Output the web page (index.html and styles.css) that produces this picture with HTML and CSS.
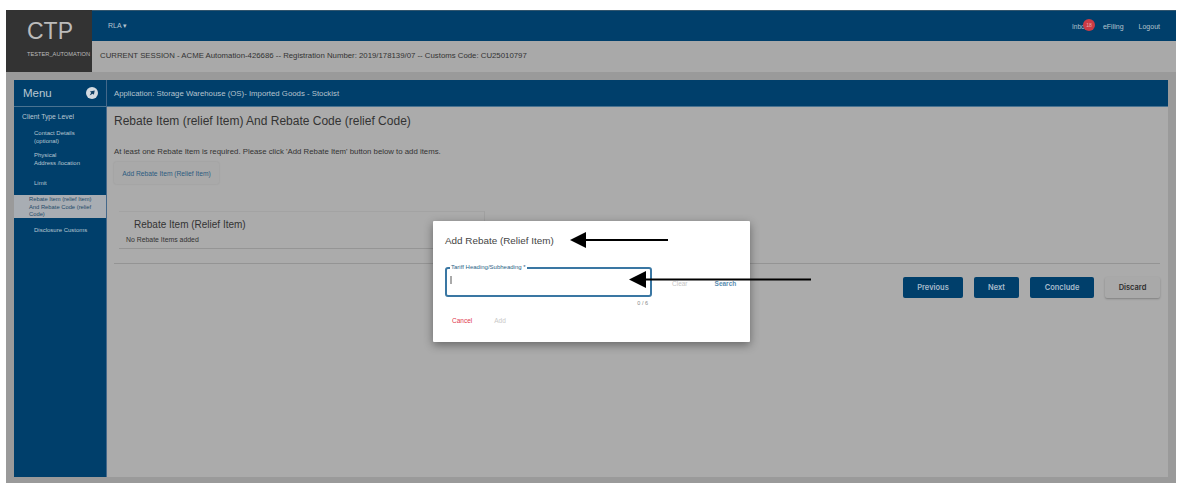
FILE: index.html
```html
<!DOCTYPE html>
<html lang="en">
<head>
    <meta charset="UTF-8">
    <title>CTP - Add Rebate</title>
    <link rel="stylesheet" href="styles.css">
</head>
<body>
    <div class="app">
        <header class="header">
            <div class="logo">
                <div class="logo-name">CTP</div>
                <div class="logo-user">TESTER_AUTOMATION</div>
            </div>
            <div class="header-main">
                <div class="topbar">
                    <span class="topbar-role">RLA &#9662;</span>
                    <nav class="topbar-links">
                        <span class="inbox">Inbox<span class="badge">18</span></span>
                        <span>eFiling</span>
                        <span>Logout</span>
                    </nav>
                </div>
                <div class="session">CURRENT SESSION - ACME Automation-426686 -- Registration Number: 2019/178139/07 -- Customs Code: CU25010797</div>
            </div>
        </header>

        <div class="workspace">
            <aside class="sidebar">
                <div class="menu-head">
                    <span>Menu</span>
                    <svg class="menu-icon" width="12" height="12" viewBox="0 0 11 11"><circle cx="5.5" cy="5.5" r="5.5" fill="#d4dbe1"/><path d="M8 3.2 3.6 4.2l1.2 1.1-1.6 2.4 3-1.6 1 1z" fill="#123f63"/></svg>
                </div>
                <ul class="menu">
                    <li class="menu-level">Client Type Level</li>
                    <li class="menu-item menu-contact">Contact Details<br>(optional)</li>
                    <li class="menu-item menu-physical">Physical<br>Address /location</li>
                    <li class="menu-item menu-one">Limit</li>
                    <li class="menu-active">Rebate Item (relief Item) And Rebate Code (relief Code)</li>
                    <li class="menu-item menu-one">Disclosure Customs</li>
                </ul>
            </aside>

            <main class="main">
                <div class="app-title">Application: Storage Warehouse (OS)- Imported Goods - Stockist</div>
                <div class="content">
                    <h1>Rebate Item (relief Item) And Rebate Code (relief Code)</h1>
                    <p class="hint">At least one Rebate Item is required. Please click 'Add Rebate Item' button below to add items.</p>
                    <button class="add-btn">Add Rebate Item (Relief Item)</button>
                    <section class="card">
                        <h2>Rebate Item (Relief Item)</h2>
                        <p>No Rebate Items added</p>
                    </section>
                    <hr class="rule">
                    <div class="actions">
                        <button class="btn primary">Previous</button>
                        <button class="btn primary">Next</button>
                        <button class="btn primary">Conclude</button>
                        <button class="btn plain">Discard</button>
                    </div>
                </div>
            </main>
        </div>
    </div>

    <div class="dialog">
        <div class="dialog-title">Add Rebate (Relief Item)</div>
        <div class="field-row">
            <fieldset class="field">
                <legend>Tariff Heading/Subheading *</legend>
                <span class="caret"></span>
            </fieldset>
            <span class="link-clear">Clear</span>
            <span class="link-search">Search</span>
        </div>
        <div class="counter">0 / 6</div>
        <div class="dialog-actions">
            <span class="cancel">Cancel</span>
            <span class="add">Add</span>
        </div>
    </div>

    <svg class="arrow arrow-title" width="98" height="16" viewBox="0 0 98 16"><path d="M0 8 16 0v7h82v2H16v7z" fill="#000"/></svg>
    <svg class="arrow arrow-field" width="182" height="17" viewBox="0 0 182 17"><path d="M0 8.5 17 0v7.500h165v2H17V17z" fill="#000"/></svg>
</body>
</html>
```

FILE: styles.css
```css
html, body {
    margin: 0;
    height: 100%;
    background: #fff;
}
body {
    font-family: "Liberation Sans", Arial, sans-serif;
    color: #333;
    overflow: hidden;
}
.app {
    margin: 10px 5px 0 6px;
    height: 473px;
    background: #9a9a9a;
    display: flex;
    flex-direction: column;
}
.header {
    display: flex;
    height: 62px;
}
.logo {
    width: 86px;
    background: #333;
    color: #bbb;
    padding-left: 21px;
    box-sizing: border-box;
    overflow: hidden;
}
.logo-name {
    font-size: 23px;
    line-height: 29px;
    margin-top: 7px;
}
.logo-user {
    font-size: 5.7px;
    line-height: 8px;
    margin-top: 4px;
    white-space: nowrap;
}
.header-main {
    flex: 1;
    display: flex;
    flex-direction: column;
}
.topbar {
    height: 31px;
    background: #003f6b;
    color: #b5c3ce;
    font-size: 7px;
    display: flex;
    align-items: center;
    justify-content: space-between;
    padding: 0 16px;
    box-sizing: border-box;
    border-top: 1px solid #33566e;
}
.topbar-links {
    display: flex;
    gap: 15px;
}
.inbox {
    position: relative;
    font-size: 6.5px;
}
.badge {
    position: absolute;
    left: 11px;
    top: -4px;
    width: 12px;
    height: 12px;
    border-radius: 50%;
    background: #cc3b45;
    color: #e8b0b0;
    font-size: 5px;
    line-height: 12px;
    text-align: center;
}
.session {
    flex: 1;
    background: #a9a9a9;
    color: #333;
    font-size: 7.8px;
    line-height: 30px;
    padding-left: 8px;
    white-space: nowrap;
}
.workspace {
    flex: 1;
    display: flex;
    margin: 8px 8px 6px 8px;
    min-height: 0;
}
.sidebar {
    width: 92px;
    background: #003f6b;
    color: #b9c7d2;
    border-right: 1px solid #44688a;
}
.menu-head {
    height: 27px;
    display: flex;
    align-items: center;
    justify-content: space-between;
    padding: 0 8px 0 9px;
    font-size: 11.5px;
    border-bottom: 1px solid #4a7391;
    box-sizing: border-box;
}
.menu {
    list-style: none;
    margin: 0;
    padding: 0;
    font-size: 6px;
    line-height: 8px;
}
.menu-level {
    padding: 6px 0 0 8px;
    height: 20px;
    box-sizing: border-box;
    font-size: 6.8px;
}
.menu-item {
    padding-left: 20px;
    box-sizing: border-box;
}
.menu-contact {
    height: 22px;
    padding-top: 2px;
}
.menu-physical {
    height: 25px;
    padding-top: 2px;
}
.menu-one {
    height: 20px;
    padding-top: 5px;
}
.menu-active {
    background: #a8adb3;
    color: #244a68;
    padding: 1px 8px 0 15px;
    height: 23px;
    box-sizing: border-box;
    line-height: 7.500px;
    font-size: 5.8px;
    margin: 1px 0 3px;
}
.main {
    flex: 1;
    min-width: 0;
    display: flex;
    flex-direction: column;
}
.app-title {
    height: 27px;
    background: #003f6b;
    color: #b5c3ce;
    font-size: 7.8px;
    line-height: 27px;
    padding-left: 7px;
    border-bottom: 1px solid #4a7391;
    box-sizing: border-box;
}
.content {
    flex: 1;
    background: #ababab;
    padding: 0 8px 0 7px;
}
h1 {
    margin: 0;
    font-weight: normal;
    font-size: 12px;
    line-height: 14px;
    padding-top: 7px;
    color: #333;
}
.hint {
    margin: 19px 0 0;
    font-size: 7.8px;
    line-height: 9px;
    color: #333;
}
.add-btn {
    display: block;
    margin: 6px 0 0;
    width: 105px;
    height: 22px;
    padding: 0;
    border: 0;
    background: #a9a9a9;
    color: #2b5b80;
    font-family: inherit;
    font-size: 6.7px;
    box-shadow: 0 0 2px rgba(0, 0, 0, 0.12);
    border-radius: 2px;
}
.card {
    margin: 27px 0 0 5px;
    width: 366px;
    height: 38px;
    padding: 7px 7px 0;
    box-sizing: border-box;
    border-bottom: 1px solid #959595;
    border-right: 1px solid #a0a0a0;
    border-top: 1px solid #a3a3a3;
}
.card h2 {
    margin: 0 0 0 8px;
    font-weight: normal;
    font-size: 10px;
    line-height: 11px;
}
.card p {
    margin: 6px 0 0;
    font-size: 6.9px;
    line-height: 7px;
}
.rule {
    margin: 14px 0 0;
    border: 0;
    border-top: 1px solid #949494;
}
.actions {
    display: flex;
    justify-content: flex-end;
    gap: 11px;
    margin-top: 13px;
    align-items: center;
}
.btn {
    height: 21px;
    padding: 0;
    border: 0;
    border-radius: 2px;
    font-family: "Inter", "Open Sans", sans-serif;
    font-size: 7.5px;
    font-weight: 600;
}
.primary {
    background: #003f6b;
    color: #a9bccb;
}
.primary:nth-child(1) { width: 60px; }
.primary:nth-child(2) { width: 45px; }
.primary:nth-child(3) { width: 64px; }
.plain {
    width: 55px;
    background: #a9a9a9;
    color: #2e2e2e;
    box-shadow: 0 1px 2px rgba(0, 0, 0, 0.25);
}

/* modal sits over the page */
.dialog {
    position: absolute;
    left: 433px;
    top: 221px;
    width: 317px;
    height: 121px;
    box-sizing: border-box;
    padding: 13px 12px 0;
    background: #fff;
    box-shadow: 0 3px 10px rgba(0, 0, 0, 0.4);
    border-radius: 1px;
}
.dialog-title {
    font-size: 9.9px;
    line-height: 14px;
    color: #444;
}
.field-row {
    display: flex;
    align-items: center;
    margin-top: 17px;
    font-size: 6.5px;
}
.field {
    width: 207px;
    height: 32px;
    margin: 0;
    padding: 0 0 0 3px;
    box-sizing: border-box;
    border: 2px solid #3a77a3;
    border-radius: 3px;
}
.field legend {
    padding: 0 1px;
    font-size: 6px;
    line-height: 5px;
    color: #2b5f86;
}
.caret {
    display: block;
    width: 2px;
    height: 8px;
    margin-top: 6px;
    background: #aaa;
}
.link-clear {
    margin: 4px 0 0 20px;
    color: #c5c5c5;
}
.link-search {
    margin: 4px 0 0 27px;
    font-weight: bold;
    color: #5b8db0;
}
.counter {
    width: 203px;
    text-align: right;
    margin-top: 3px;
    font-size: 5.5px;
    line-height: 7px;
    color: #888;
}
.dialog-actions {
    display: flex;
    gap: 22px;
    margin-top: 10px;
    padding-left: 7px;
    font-size: 6.5px;
}
.cancel {
    color: #e0384c;
}
.add {
    color: #c8c8c8;
}
.arrow {
    position: absolute;
}
.arrow-title {
    left: 570px;
    top: 232px;
}
.arrow-field {
    left: 629px;
    top: 271px;
}
```
